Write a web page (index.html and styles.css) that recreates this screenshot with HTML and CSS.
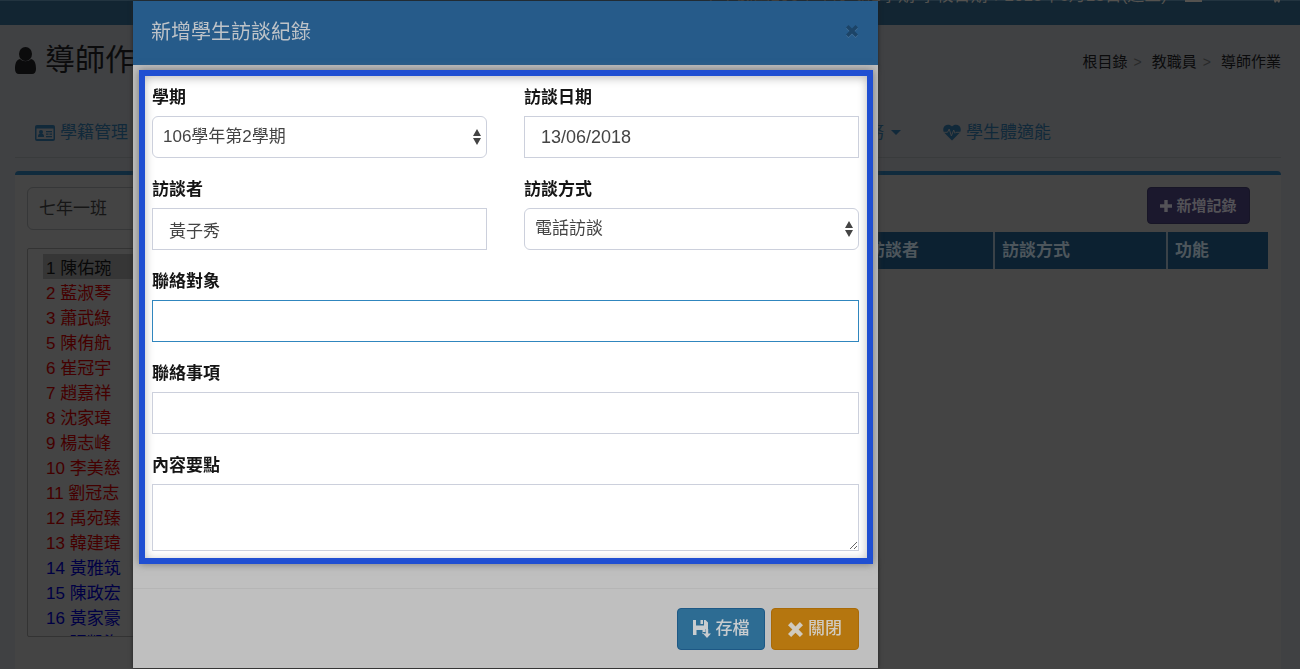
FILE: index.html
```html
<!DOCTYPE html>
<html lang="zh-Hant">
<head>
<meta charset="utf-8">
<title>導師作業</title>
<link rel="stylesheet" href="styles.css">
</head>
<body>
<div class="topbar">
  <span>中華民國106學年度 第2學期 學校日期：2018年6月13日(週三)</span>
  <span class="topbar-box"></span>
  <svg class="topbar-mark" width="6" height="4" viewBox="0 0 6 4"><path d="M0 0h6v2L5 4 3 2 1 4 0 2z"/></svg>
</div>
<main class="page">
  <header class="page-head">
    <svg class="user-icon" viewBox="0 0 21 27"><ellipse cx="10.500" cy="7" rx="6.500" ry="7"/><path d="M5 12C1 13 0 17 0 22c0 3 1.500 5 4 5h13c2.500 0 4-2 4-5 0-5-1-9-5-10-3 3-8 3-11 0z"/></svg>
    <h1>導師作業</h1>
    <nav class="crumbs"><a href="#">根目錄</a><span>&gt;</span><a href="#">教職員</a><span>&gt;</span><a href="#">導師作業</a></nav>
  </header>
  <nav class="tabs">
    <a href="#" class="tab">
      <svg width="20" height="16" viewBox="0 0 20 16"><path fill-rule="evenodd" d="M2 0h16a2 2 0 0 1 2 2v12a2 2 0 0 1-2 2H2a2 2 0 0 1-2-2V2a2 2 0 0 1 2-2zM1.500 3.500v10.500h17V3.500z"/><circle cx="6" cy="7" r="2"/><path d="M3 12c0-3 1-3.500 3-3.500s3 .5 3 3.500zM11 6h6v1.300h-6zM11 8.500h2.500v1.300H11zM14.500 8.500H17v1.300h-2.500zM11 11h6v1.200h-6z"/></svg>
      學籍管理</a>
    <a href="#" class="tab tab-service">服務 <i class="caret"></i></a>
    <a href="#" class="tab">
      <svg width="18" height="17" viewBox="0 0 18 17"><path d="M9 2.500C7 .4 4 .3 2 1.800.2 3.300-.2 6 .8 8.200L9 16.500l8.200-8.300c1-2.200.6-4.900-1.200-6.400-2-1.500-5-1.400-7 .7z"/><path class="pulse" d="M0 8.300h4.500L6.200 5l2.200 7 2.300-6 1.300 3.300L13 8.300h5"/></svg>
      學生體適能</a>
  </nav>
  <section class="box">
    <div class="side">
      <select class="class-select" aria-label="班級"><option>七年一班</option></select>
      <select class="students" size="15" aria-label="學生">
        <option selected>1 陳佑琬</option>
        <option>2 藍淑琴</option>
        <option>3 蕭武綠</option>
        <option>5 陳侑航</option>
        <option>6 崔冠宇</option>
        <option>7 趙嘉祥</option>
        <option>8 沈家瑋</option>
        <option>9 楊志峰</option>
        <option>10 李美慈</option>
        <option>11 劉冠志</option>
        <option>12 禹宛臻</option>
        <option>13 韓建瑋</option>
        <option class="blue">14 黃雅筑</option>
        <option class="blue">15 陳政宏</option>
        <option class="blue">16 黃家豪</option>
        <option class="blue">17 張凱海</option>
      </select>
    </div>
    <div class="records">
      <button class="add" type="button"><svg width="12" height="12" viewBox="0 0 12 12"><path d="M4.300 0h3.400v4.300H12v3.400H7.700V12H4.300V7.700H0V4.300h4.300z"/></svg>新增記錄</button>
      <table>
        <thead><tr><th></th><th class="c-person">訪談者</th><th class="c-way">訪談方式</th><th class="c-act">功能</th></tr></thead>
      </table>
    </div>
  </section>
</main>

<div class="overlay">
  <form class="modal" role="dialog" aria-labelledby="dialog-title">
    <header class="modal-head">
      <h2 id="dialog-title">新增學生訪談紀錄</h2>
      <button class="close" type="button" aria-label="關閉視窗"><svg width="12" height="12" viewBox="0 0 12 12"><path d="M0 2.500L2.500 0 6 3.500 9.500 0 12 2.500 8.500 6 12 9.500 9.500 12 6 8.500 2.500 12 0 9.500 3.500 6z"/></svg></button>
    </header>
    <div class="fields">
      <div class="field"><label for="term">學期</label>
        <div class="pick"><select id="term"><option>106學年第2學期</option></select><svg width="8" height="16" viewBox="0 0 8 16"><path d="M4 0l4 7H0zM4 16l4-7H0z"/></svg></div></div>
      <div class="field"><label for="date">訪談日期</label><input id="date" class="date" type="text" value="13/06/2018"></div>
      <div class="field"><label for="person">訪談者</label><input id="person" type="text" value="黃子秀"></div>
      <div class="field"><label for="way">訪談方式</label>
        <div class="pick"><select id="way"><option>電話訪談</option></select><svg width="8" height="16" viewBox="0 0 8 16"><path d="M4 0l4 7H0zM4 16l4-7H0z"/></svg></div></div>
      <div class="field wide"><label for="target">聯絡對象</label><input id="target" class="active" type="text"></div>
      <div class="field wide"><label for="matter">聯絡事項</label><input id="matter" type="text"></div>
      <div class="field wide"><label for="content">內容要點</label><textarea id="content"></textarea></div>
    </div>
    <footer class="modal-foot">
      <button class="btn save" type="submit"><svg width="18" height="18" viewBox="0 0 18 18"><path d="M0 0h3v5.500h8V0h1.500L15 2.500V9h-2.500v3H9.500L11 14H9.500v-4H3.500v5H0zM7.500 0H10v4H7.500z"/><path d="M12.800 9h2.400v4.500H18L14 18l-4-4.500h2.800z"/></svg>存檔</button>
      <button class="btn shut" type="button"><svg width="15" height="15" viewBox="0 0 12 12"><path d="M0 2.500L2.500 0 6 3.500 9.500 0 12 2.500 8.500 6 12 9.500 9.500 12 6 8.500 2.500 12 0 9.500 3.500 6z"/></svg>關閉</button>
    </footer>
  </form>
</div>
</body>
</html>
```
FILE: styles.css
```css
* { box-sizing: border-box; }
html { height: 100%; overflow: hidden; }
body {
  margin: 0;
  min-height: 100%;
  display: flex;
  flex-direction: column;
  background: #404143;
  color: #0b0b0c;
  font: 17px/24px "Liberation Sans", "Noto Sans CJK TC", sans-serif;
}
a { color: inherit; text-decoration: none; }
svg { fill: currentColor; flex: none; }
button, input, select, textarea { font: inherit; color: inherit; margin: 0; }
h1, h2 { margin: 0; font-weight: 400; }

.topbar {
  height: 25px;
  overflow: hidden;
  display: flex;
  justify-content: flex-end;
  align-items: flex-end;
  gap: 18px;
  padding: 0 20px 17px 0;
  background: #122532;
  color: #54524f;
  box-shadow: inset 0 1px #223440;
}
.topbar-box { width: 17px; height: 16px; margin: 0 54px 6px 0; background: #54524f; }
.topbar-mark { margin-bottom: 5px; }

.page { flex: 1; display: flex; flex-direction: column; padding: 0 19px 0 15px; }
.page-head { display: flex; align-items: center; gap: 9px; height: 70px; }
.user-icon { width: 21px; height: 27px; }
h1 { font-size: 30px; line-height: 40px; }
.crumbs { margin-left: auto; display: flex; gap: 6px; font-size: 15px; padding-top: 4px; }
.crumbs span { color: #28292a; font-size: 14px; margin-right: 4px; }
.tabs {
  display: flex;
  align-items: center;
  gap: 42px;
  height: 63px;
  padding: 13px 20px 0;
  border-bottom: 1px solid #393b3c;
  color: #11293a;
}
.tab { display: flex; align-items: center; gap: 5px; }
.tab:first-child { width: 160px; }
.tab-service { margin-left: 613px; gap: 7px; }
.caret { border: 5px solid transparent; border-top-color: currentColor; border-bottom: 0; }
.pulse { fill: none; stroke: #404143; stroke-width: 1; }
.box {
  flex: 1;
  display: flex;
  gap: 13px;
  margin-top: 13px;
  padding: 12px 13px 0 12px;
  border-top: 4px solid #102b3d;
  border-radius: 4px 4px 0 0;
  background: #444;
}
.side { width: 300px; display: flex; flex-direction: column; gap: 18px; }
.class-select {
  appearance: none;
  height: 43px;
  padding: 0 11px;
  border: 1px solid #363738;
  border-radius: 6px;
  background: #444;
  color: #161616;
}
.students {
  appearance: none;
  height: 389px;
  padding: 5px 15px;
  border: 1px solid #333;
  background: #444;
  overflow: hidden;
  outline: none;
}
.students option { height: 25px; min-height: 25px; padding: 0 3px; line-height: 21px; color: #440000; }
.students option.blue { color: #000044; }
.students option:checked { color: #080808; background: #363636 linear-gradient(#363636, #363636); }
.records { flex: 1; display: flex; flex-direction: column; gap: 8px; }
.add {
  align-self: flex-end;
  display: flex;
  align-items: center;
  justify-content: center;
  gap: 4px;
  width: 103px;
  height: 37px;
  margin-right: 18px;
  padding: 0;
  border: 1px solid #171526;
  border-radius: 4px;
  background: #1b182d;
  color: #535257;
  font-size: 15px;
  font-weight: 700;
}
table { width: 100%; table-layout: fixed; border-collapse: collapse; background: #0c2131; color: #4d565c; }
th { height: 37px; padding: 0 7px; text-align: left; border-right: 2px solid #3a4248; }
th:last-child { border-right: 0; }
.c-person { width: 134px; }
.c-way { width: 173px; }
.c-act { width: 101px; }

.overlay { position: fixed; inset: 0; padding: 1px 0 1px 133px; }
.modal {
  width: 745px;
  max-width: 100%;
  height: 100%;
  display: flex;
  flex-direction: column;
  background: #bfbfbf;
  box-shadow: 0 0 4px #222;
}
.modal-head {
  display: flex;
  align-items: center;
  justify-content: space-between;
  height: 64px;
  padding: 0 20px 4px 18px;
  background: #265b8a;
  color: #bec3c8;
}
h2 { font-size: 20px; line-height: 28px; padding-top: 2px; }
.close { display: flex; padding: 0; border: 0; background: none; color: #1c4467; filter: drop-shadow(0 1px #426f97); }
.fields {
  display: grid;
  grid-template-columns: 1fr 1fr;
  gap: 20px 37px;
  margin: 5px 5px 24px 6px;
  padding: 10px 8px 7px 7px;
  border: 6px solid #204fd2;
  background: #fff;
  color: #444;
  box-shadow: 0 0 8px #777, inset 0 2px 10px #bbb;
}
.field { display: flex; flex-direction: column; gap: 6px; min-width: 0; }
.wide { grid-column: 1 / -1; }
label { color: #151515; font-weight: 700; }
.field input, .field select {
  width: 100%;
  height: 42px;
  padding: 0 16px;
  border: 1px solid #ccd0dc;
  border-radius: 0;
  background: #fff;
  outline: none;
}
.field select { appearance: none; padding: 0 10px; border-radius: 6px; }
.field input.date { font-size: 18px; }
.field input.active { border-color: #3086be; }
.pick { position: relative; }
.pick svg { position: absolute; right: 6px; top: 13px; pointer-events: none; }
textarea { height: 67px; border: 1px solid #ccd0dc; resize: vertical; background: #fff; }
.modal-foot {
  flex: 1;
  display: flex;
  justify-content: flex-end;
  align-items: flex-start;
  gap: 6px;
  padding: 19px 19px 0;
  border-top: 1px solid #b5b5b5;
}
.btn {
  display: flex;
  align-items: center;
  justify-content: center;
  gap: 5px;
  width: 88px;
  height: 42px;
  padding: 0;
  border: 1px solid #1d5885;
  border-radius: 4px;
  background: #2d6c93;
  color: #c8cccf;
  font-weight: 500;
}
.shut { border-color: #a96a08; background: #b5760f; color: #d0cabe; }
```
